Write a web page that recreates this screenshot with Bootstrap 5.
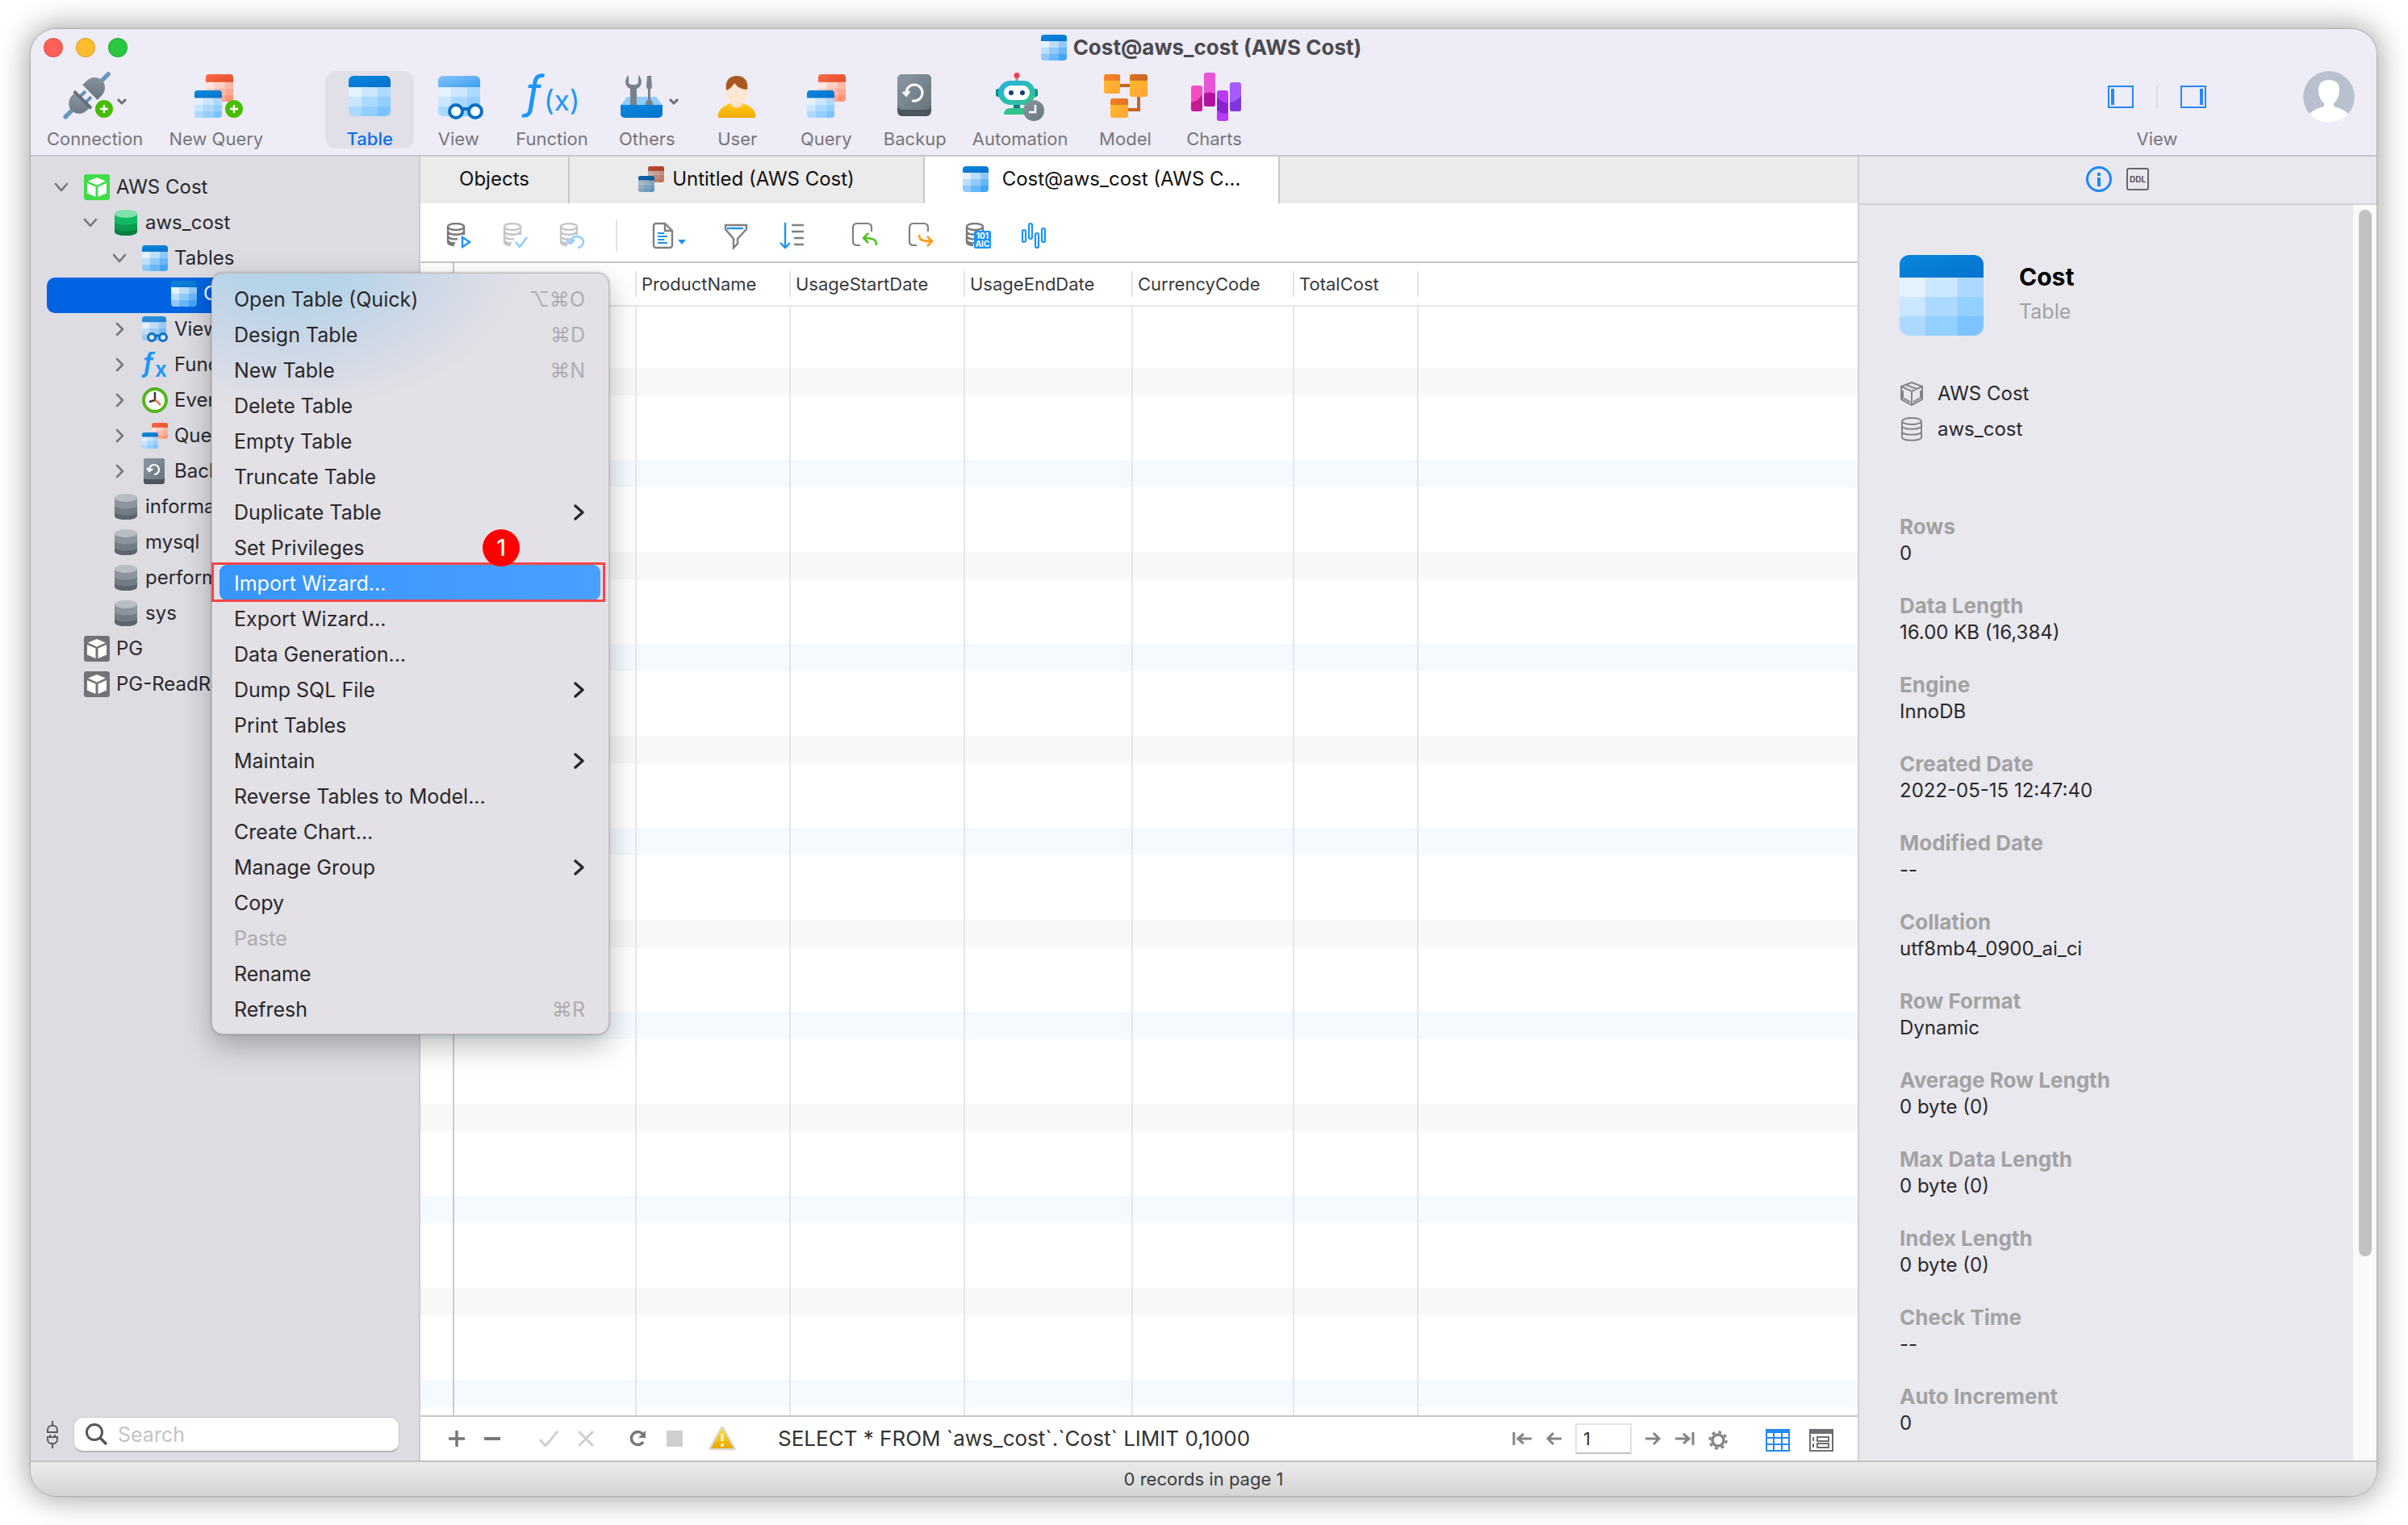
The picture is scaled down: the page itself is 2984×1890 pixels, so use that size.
<!DOCTYPE html>
<html lang="en">
<head>
<meta charset="utf-8">
<meta name="viewport" content="width=device-width, initial-scale=1">
<title>Cost@aws_cost (AWS Cost)</title>
<link href="https://cdn.jsdelivr.net/npm/bootstrap@5.3.0/dist/css/bootstrap.min.css" rel="stylesheet">
<style>
body{font-family:Inter,"Liberation Sans",sans-serif;background:#fff;color:#29282c;font-size:24px;line-height:32px}
button{font:inherit;color:inherit}
svg{display:block;flex:none}
.desk{min-height:100vh;padding:36px 39px 36px 38px}
.app-window{border-radius:32px;box-shadow:0 0 36px 4px rgba(0,0,0,.36),0 0 2px rgba(0,0,0,.5)}
.app-body,.app-top,.app-status{overflow:hidden}
/* title and toolbar */
.app-top{background:#eeecf6;border-bottom:2px solid #c6c5cb;border-radius:32px 32px 0 0}
.title-row{height:46px;padding:0 22px 0 16px}
.light{width:24px;height:24px;border-radius:50%;border:1px solid rgba(0,0,0,.15);padding:0}
.l-red{background:#ff5f57}.l-yellow{background:#febc2e}.l-green{background:#28c840}
.win-title{font-size:26px;font-weight:700;color:#4b4a4f}
.tools{padding:6px 27px 8px 4px}
.tool{border:0;background:none;min-width:110px;height:96px;padding:0 16px;font-size:22px;line-height:24px;color:#77767b;border-radius:14px;display:flex;flex-direction:column;align-items:center;gap:8px;white-space:nowrap}
.tool svg{width:80px;height:64px;margin:0 -8px;overflow:visible}
.tool.wide{min-width:114px}
.tool.active{background:#e1dfe7;color:#0a6ff0;font-weight:500}
.view-pair{gap:28px;height:64px}
.view-label{font-size:22px;line-height:24px;color:#77767b;margin-top:8px}
.thin{width:2px;background:#dddce3}
.me{width:64px;height:64px;margin-left:120px}
/* navigation tree */
.side{width:483px;background:#dddce2;border-right:2px solid #cdccd2;flex:none}
.tree{padding:18px 20px 0}
.node{height:44px;padding:0 0 4px 8px;display:flex;align-items:center;width:100%;border:0;background:none;text-align:left;white-space:nowrap;overflow:hidden}
.node .chev{width:20px;height:20px;margin-right:18px}
.node .ico{width:32px;height:32px;margin-right:8px}
.node.d1{padding-left:44px}.node.d2{padding-left:80px}.node.d3{padding-left:116px}
.node.sel{background:#0063e1;color:#fff;border-radius:10px}
.find{padding:0 24px 10px 19px;gap:18px}
.find-box{height:44px;background:#fff;border:1px solid #c9c8ce;border-bottom:2px solid #b5b4ba;border-radius:12px;padding:0 14px;gap:12px;min-width:0}
.find-box input{border:0;background:none;outline:0;font-size:25px;color:#333;padding:0;width:100%;min-width:0}
.find-box input::placeholder{color:#c4c4c6;opacity:1}
/* tabs */
.tabs{background:#ebebeb;height:58px}
.tab{border:0;border-right:2px solid #c9c9c9;background:none;color:#111;width:440px;padding:0 0 2px;gap:10px}
.tab.first{width:185px}
.tab.on{background:#fff;gap:17px}
.actions{height:74px;border-bottom:2px solid #c6c6c6;gap:38px;padding:8px 32px 0}
.act{border:0;background:none;padding:0;width:32px;height:32px}
.act svg{width:32px;height:32px;overflow:visible}
.act.drop{width:50px;margin-left:5px}
.act.apart{margin-left:20px}
.bar-rule{width:2px;height:40px;background:#e2e2e2}
/* grid */
.grid-area{background:repeating-linear-gradient(#fff 0 76px,#f8f8f8 76px 110px,#fff 110px 190px,#f4faff 190px 224px,#fff 224px 228px) 0 54px}
.grid-table{width:100%;height:100%;table-layout:fixed;border-collapse:separate;border-spacing:0}
.grid-table thead tr{height:54px}
.grid-table th{background:#fff;font-size:22px;font-weight:400;border-bottom:2px solid #e6e6e6;padding:0;color:#3a3a3c}
.grid-table th span{display:block;height:32px;line-height:32px;padding-left:6px;border-right:2px solid #e4e4e4;white-space:nowrap}
.grid-table td{border-right:2px solid #e6e6e6;padding:0}
.grid-table th.rownum,.grid-table td.rownum{border-right:2px solid #cbcacf}
.grid-table th:last-child span,.grid-table td:last-child{border-right:0}
.foot{height:56px;border-top:2px solid #c6c6c6;background:#fff;padding:0 30px 0 35px}
.foot button{border:0;background:none;padding:0}
.sql{font-size:26px;color:#333}
.page-no{width:70px;height:38px;border:2px solid #e2e2e2;border-bottom-color:#c4c4c4;padding:0 0 0 8px;font-size:22px;color:#333}
/* inspector */
.info{width:643px;background:#e9e8ee;border-left:2px solid #d0cfd5;flex:none}
.info-head{height:60px;border-bottom:2px solid #d2d1d7;gap:18px;padding:0 2px 2px 0}
.info-head button{border:0;background:none;padding:0}
.info-main{padding:62px 20px 0 50px;height:100%}
.obj-name{font-size:30px;font-weight:700;color:#000;line-height:38px}
.muted{color:#a2a1a6}
.src{gap:17px;height:44px}
.props{margin:83px 0 0}
.props dt{font-size:26px;font-weight:700;color:#a2a2a4;line-height:32px}
.props dd{margin:0 0 33px;line-height:33px}
.props dd:last-child{margin-bottom:30px}
.track{width:29px;background:#fafafa;padding:6px 7px;flex:none}
.thumb{width:16px;height:84%;background:#c2c2c2;border-radius:8px}
.app-status{height:44px;border-top:2px solid #c3c3c3;background:linear-gradient(#ebebeb,#d4d4d4);border-radius:0 0 32px 32px;font-size:22px;color:#3b3b3d}
/* context menu */
.ctx{position:absolute;left:224px;top:302px;width:493px;margin:0;padding:9px 10px 9px 9px;border:1px solid #bdbbc2;border-radius:14px;font-size:25px;background:radial-gradient(ellipse 290px 190px at 100px -20px,#b3d3e9 0,#b9d4e8 30%,rgba(197,213,231,.75) 60%,rgba(227,224,230,0) 100%),#e3e0e6;box-shadow:0 14px 36px rgba(0,0,0,.27),0 0 3px rgba(0,0,0,.3)}
.ctx li{position:relative}
.ctx .dropdown-item{height:44px;padding:2px 19px 0 18px;border-radius:9px;color:#29282c;display:flex;justify-content:space-between;align-items:center}
.ctx .dropdown-item:disabled{color:#aeacb2}
.ctx .dropdown-item.active{color:#fff;background:linear-gradient(90deg,#3795fb,#4aa0ff)}
.ctx kbd{font:inherit;background:none;color:#aeacb2;padding:0}
.ctx .framed::after{content:"";position:absolute;inset:-3px -6px -2px -10px;border:3px solid #fb4549;pointer-events:none}
.step{position:absolute;left:326px;top:-44px;width:46px;height:46px;border-radius:50%;background:#fe0000;color:#fff;font-size:28px;font-weight:500;z-index:2}
</style>
</head>
<body>
<svg width="0" height="0" class="position-absolute" aria-hidden="true">
<defs>
<linearGradient id="gb" x1="0" y1="0" x2="1" y2="1"><stop offset="0" stop-color="#0a87dc"/><stop offset="1" stop-color="#0572ce"/></linearGradient>
<linearGradient id="gl" x1="0" y1="0" x2="1" y2="1"><stop offset="0" stop-color="#86c4fb"/><stop offset="1" stop-color="#3c9ff2"/></linearGradient>
<linearGradient id="gr" x1="0" y1="0" x2="1" y2="1"><stop offset="0" stop-color="#ff6a44"/><stop offset="1" stop-color="#dc4f2c"/></linearGradient>
<linearGradient id="gg" x1="0" y1="0" x2="1" y2="1"><stop offset="0" stop-color="#8b98a2"/><stop offset="1" stop-color="#68747e"/></linearGradient>
<linearGradient id="gt" x1="0" y1="0" x2="1" y2="1"><stop offset="0" stop-color="#25b0e6"/><stop offset="1" stop-color="#31c788"/></linearGradient>
<linearGradient id="go" x1="0" y1="0" x2="1" y2="0"><stop offset="0" stop-color="#fb8428"/><stop offset="1" stop-color="#c96622"/></linearGradient>
<linearGradient id="gy" x1="0" y1="0" x2="1" y2="1"><stop offset="0" stop-color="#ffbd26"/><stop offset="1" stop-color="#ffa43a"/></linearGradient>
<linearGradient id="gw" x1="0" y1="0" x2="0" y2="1"><stop offset="0" stop-color="#ffe04a"/><stop offset="1" stop-color="#e8a600"/></linearGradient>
<linearGradient id="gu" x1="0" y1="0" x2="0" y2="1"><stop offset="0" stop-color="#ffcb1a"/><stop offset="1" stop-color="#f2a900"/></linearGradient>
<clipPath id="ct"><rect width="52" height="50" rx="6"/></clipPath>
<clipPath id="cav"><circle cx="32" cy="32" r="32"/></clipPath>
<symbol id="cells" viewBox="0 0 52 36" preserveAspectRatio="none"><path fill="#e3f2ff" d="M0 0h16v12H0z"/><path fill="#cbe6ff" d="M16 0h20v12H16zM0 12h16v12H0z"/><path fill="#acd9ff" d="M36 0h16v12H36zM16 12h20v12H16zM0 24h16v12H0z"/><path fill="#93cfff" d="M36 12h16v12H36zM16 24h20v12H16z"/><path fill="#7dc3ff" d="M36 24h16v12H36z"/></symbol>
<symbol id="cellsR" viewBox="0 0 52 36" preserveAspectRatio="none"><path fill="#ffe6e0" d="M0 0h16v12H0z"/><path fill="#ffd0c3" d="M16 0h20v12H16zM0 12h16v12H0z"/><path fill="#ffb8a4" d="M36 0h16v12H36zM16 12h20v12H16zM0 24h16v12H0z"/><path fill="#ffa88f" d="M36 12h16v12H36zM16 24h20v12H16z"/><path fill="#ff947a" d="M36 24h16v12H36z"/></symbol>
<symbol id="tbl" viewBox="0 0 52 50"><g clip-path="url(#ct)"><rect width="52" height="14" fill="url(#gb)"/><use href="#cells" y="14" width="52" height="36"/></g></symbol>
<symbol id="tblL" viewBox="0 0 52 50"><g clip-path="url(#ct)"><rect width="52" height="14" fill="url(#gl)"/><use href="#cells" y="14" width="52" height="36"/></g></symbol>
<symbol id="tblS" viewBox="0 0 52 50" preserveAspectRatio="none"><g clip-path="url(#ct)"><rect width="52" height="14" fill="url(#gb)"/><use href="#cells" y="14" width="52" height="36"/></g></symbol>
<symbol id="tblR" viewBox="0 0 52 50" preserveAspectRatio="none"><g clip-path="url(#ct)"><rect width="52" height="15" fill="url(#gr)"/><use href="#cellsR" y="14" width="52" height="36"/></g></symbol>
<symbol id="t32" viewBox="0 0 32 32"><path fill="url(#gb)" d="M4 0h24a4 4 0 0 1 4 4v4H0V4a4 4 0 0 1 4-4z"/><path fill="#e4f2fe" d="M0 8h10v8H0z"/><path fill="#bbdefb" d="M10 8h12v8H10zM0 16h10v8H0z"/><path fill="#90c9f9" d="M22 8h10v8H22zM10 16h12v8H10zM0 24h10v8H4a4 4 0 0 1-4-4z"/><path fill="#68b7f8" d="M22 16h10v8H22zM10 24h12v8H10z"/><path fill="#45a5f8" d="M22 24h10v4a4 4 0 0 1-4 4h-6z"/></symbol>
<symbol id="q32" viewBox="0 0 32 32"><use href="#tblR" x="12" y="0" width="20" height="20"/><use href="#tblS" x="0" y="12" width="20" height="20"/></symbol>
<symbol id="down" viewBox="0 0 20 20"><path d="M3 6l7 8 7-8" fill="none" stroke="#77767b" stroke-width="2.6" stroke-linecap="round" stroke-linejoin="round"/></symbol>
<symbol id="right" viewBox="0 0 20 20"><path d="M7 3l7 7-7 7" fill="none" stroke="#77767b" stroke-width="2.6" stroke-linecap="round" stroke-linejoin="round"/></symbol>
<symbol id="sub" viewBox="0 0 14 20"><path d="M2 2l9 8-9 8" fill="none" stroke="#29282c" stroke-width="3.400" stroke-linecap="round" stroke-linejoin="round"/></symbol>
<symbol id="cube" viewBox="0 0 32 32"><rect width="32" height="32" rx="3" fill="currentColor"/><path fill="#fff" d="M16 4l11 4.500-11 5L5 8.500zM4 11l10.500 4.500V28L4 23.500zM28 11l-10.500 4.500V28L28 23.500z"/></symbol>
<symbol id="dbG" viewBox="0 0 32 32"><path fill="#067e40" d="M2 20v7c0 7 28 7 28 0v-7z"/><path fill="#0a9c50" d="M2 13v9c0 6 28 6 28 0v-9z"/><path fill="#10b862" d="M2 5v9c0 6 28 6 28 0V5z"/><ellipse cx="16" cy="5" rx="14" ry="5" fill="#7fe0ac"/></symbol>
<symbol id="dbK" viewBox="0 0 32 32"><path fill="#5c656d" d="M2 20v7c0 7 28 7 28 0v-7z"/><path fill="#727c85" d="M2 13v9c0 6 28 6 28 0v-9z"/><path fill="#8c959d" d="M2 5v9c0 6 28 6 28 0V5z"/><ellipse cx="16" cy="5" rx="14" ry="5" fill="#b7bdc2"/></symbol>
<symbol id="dbl" viewBox="0 0 32 32"><g fill="none" stroke-width="2.400"><ellipse cx="12" cy="5" rx="10" ry="4"/><path d="M2 5v19c0 3 5 4 8 4M22 5v10M2 11c2 5 18 5 20 0M2 17c1 3 8 4 12 3M2 22c1 3 6 4 9 3"/></g></symbol>
<symbol id="plus" viewBox="0 0 22 22"><circle cx="11" cy="11" r="11" fill="#46bd02"/><path d="M11 6v10M6 11h10" stroke="#fff" stroke-width="2.400"/></symbol>
</defs>
</svg>
<div class="desk d-flex flex-column">
<div class="app-window position-relative d-flex flex-column flex-grow-1">
<header class="app-top">
  <div class="title-row row g-0 align-items-center">
    <div class="col d-flex gap-3"><button class="light l-red" aria-label="Close"></button><button class="light l-yellow" aria-label="Minimize"></button><button class="light l-green" aria-label="Zoom"></button></div>
    <div class="col-auto d-flex align-items-center gap-2 win-title"><svg width="32" height="32"><use href="#t32"/></svg>Cost@aws_cost (AWS Cost)</div>
    <div class="col"></div>
  </div>
  <nav class="tools d-flex" aria-label="Toolbar">
    <button class="tool"><svg viewBox="0 0 80 64"><g transform="translate(30 30) rotate(45)"><path d="M0-37v12M0 26v12" stroke="#6a97c0" stroke-width="5.500" stroke-linecap="round"/><path d="M-5-2v11M5-2v11" stroke="#5f8fba" stroke-width="4"/><path d="M-13-5v-7a13 14 0 0 1 26 0v7z" fill="url(#gg)"/><path d="M-13 7v6a13 14 0 0 0 26 0V7z" fill="url(#gg)"/><path d="M-15 6h30v4h-30z" fill="#646f78"/></g><use href="#plus" x="40" y="36" width="22" height="22"/><path d="M68 35l5 5 5-5" fill="none" stroke="#6e6d72" stroke-width="3"/></svg>Connection</button>
    <button class="tool"><svg viewBox="0 0 80 64"><use href="#tblR" x="27" y="4" width="34" height="34"/><use href="#tblS" x="13" y="24" width="34" height="34"/><use href="#plus" x="51" y="36" width="22" height="22"/></svg>New Query</button>
    <button class="tool active" style="margin-left:61px"><svg viewBox="0 0 80 64"><use href="#tbl" x="14" y="6" width="52" height="50"/></svg>Table</button>
    <button class="tool"><svg viewBox="0 0 80 64"><use href="#tblL" x="15" y="6" width="52" height="50"/><g fill="#fff" stroke="#0a6fc4" stroke-width="4"><path d="M44 47h10"/><circle cx="37" cy="50" r="8"/><circle cx="61" cy="50" r="8"/></g></svg>View</button>
    <button class="tool"><svg viewBox="0 0 80 64"><g fill="#1c96f8" font-family="Inter"><text x="6" y="46" font-size="56" font-style="italic">ƒ</text><text x="30" y="49" font-size="35">(x)</text></g></svg>Function</button>
    <button class="tool wide"><svg viewBox="0 0 80 64"><path d="M15 32h36l8 11H7z" fill="#8fcbfb"/><path d="M17 5c-6 6-5 14 2 17v22h8V22c7-3 8-11 2-17v10l-3 2h-6l-3-2z" fill="#77838c"/><path d="M40 6h5l1 14-2 3v12l3 4v4h-9v-4l3-4V23l-2-3z" fill="#77838c"/><path d="M7 42h52v11a5 5 0 0 1-5 5H12a5 5 0 0 1-5-5z" fill="url(#gb)"/><path d="M68 35l5 5 5-5" fill="none" stroke="#6e6d72" stroke-width="3"/></svg>Others</button>
    <button class="tool"><svg viewBox="0 0 80 64"><path d="M16 58v-4c1-8 9-12 16-14h14c7 2 15 6 16 14v4z" fill="url(#gu)"/><path d="M32 36h14v7q-7 6-14 0z" fill="#ffdcc0"/><ellipse cx="39" cy="26" rx="14" ry="16" fill="#ffe6d2"/><path d="M26 24c-2-12 4-18 13-18s15 6 13 17q-10 0-16-8-4 7-10 9z" fill="#a9591f"/></svg>User</button>
    <button class="tool"><svg viewBox="0 0 80 64"><use href="#tblR" x="30" y="4" width="34" height="34"/><use href="#tblS" x="16" y="24" width="34" height="34"/></svg>Query</button>
    <button class="tool"><svg viewBox="0 0 80 64"><rect x="18" y="4" width="42" height="52" rx="6" fill="#4c555d"/><path d="M24 4h30a6 6 0 0 1 6 6v32a6 6 0 0 1-6 6H24a6 6 0 0 1-6-6V10a6 6 0 0 1 6-6z" fill="url(#gg)"/><path d="M29 27a10 10 0 1 1 10 10h-3M25 26l4 4 4-5" fill="none" stroke="#fff" stroke-width="3"/></svg>Backup</button>
    <button class="tool"><svg viewBox="0 0 80 64"><path d="M36 6v8" stroke="#9a9a9a" stroke-width="3"/><circle cx="36" cy="5.500" r="3.500" fill="#f23d4f"/><rect x="10" y="22" width="52" height="10" rx="3" fill="#0c8c86"/><path d="M32 40h8v8h-8z" fill="#0c7f86"/><path d="M20 54q0-8 8-8h18v8z" fill="#32c48a"/><rect x="13" y="12" width="46" height="30" rx="15" fill="url(#gt)"/><rect x="20" y="18" width="32" height="18" rx="9" fill="#fff"/><circle cx="29" cy="27" r="3" fill="#123f7c"/><circle cx="43" cy="27" r="3" fill="#123f7c"/><circle cx="57" cy="49" r="13" fill="url(#gg)"/><path d="M59 42v9h-8" fill="none" stroke="#fff" stroke-width="2.600"/></svg>Automation</button>
    <button class="tool"><svg viewBox="0 0 80 64"><path d="M34 18h12M57 32v16H44" fill="none" stroke="#c96622" stroke-width="4"/><g fill="url(#gy)"><rect x="14" y="4" width="20" height="24" rx="3"/><rect x="46" y="4" width="22" height="28" rx="3"/><rect x="22" y="34" width="22" height="24" rx="3"/></g><g fill="url(#go)"><path d="M17 4h14a3 3 0 0 1 3 3v5H14V7a3 3 0 0 1 3-3zM49 4h16a3 3 0 0 1 3 3v5H46V7a3 3 0 0 1 3-3zM25 34h16a3 3 0 0 1 3 3v5H22v-5a3 3 0 0 1 3-3z"/></g></svg>Model</button>
    <button class="tool"><svg viewBox="0 0 80 64"><rect x="12" y="18" width="14" height="32" rx="3" fill="#f54cc4"/><path d="M12 39q9-2 14-10v18a3 3 0 0 1-3 3h-8a3 3 0 0 1-3-3z" fill="#c81a93"/><rect x="28" y="2" width="14" height="42" rx="3" fill="#e955d6"/><path d="M28 28q7-3 14 0v13a3 3 0 0 1-3 3h-8a3 3 0 0 1-3-3z" fill="#b0139d"/><rect x="44" y="24" width="14" height="38" rx="3" fill="#b83af6"/><path d="M44 32q5 7 14 8v12q-8 2-14-4z" fill="#8a22cf"/><rect x="60" y="14" width="14" height="36" rx="3" fill="#a45cff"/><path d="M60 39q9-2 14-8v16a3 3 0 0 1-3 3h-8a3 3 0 0 1-3-3z" fill="#7f37db"/></svg>Charts</button>
    <div class="ms-auto d-flex">
      <div class="d-flex flex-column align-items-center">
        <div class="view-pair d-flex align-items-center">
          <button class="border-0 bg-transparent p-0" aria-label="Toggle navigation pane"><svg width="32" height="28"><path d="M1 1h30v26H1z" fill="none" stroke="#2487ff" stroke-width="2"/><path d="M4 4h4v20H4z" fill="#2487ff"/></svg></button>
          <div class="thin" style="height:28px"></div>
          <button class="border-0 bg-transparent p-0" aria-label="Toggle information pane"><svg width="32" height="28"><path d="M1 1h30v26H1z" fill="none" stroke="#2487ff" stroke-width="2"/><path d="M24 4h4v20h-4z" fill="#2487ff"/></svg></button>
        </div>
        <div class="view-label">View</div>
      </div>
      <svg class="me" viewBox="0 0 64 64" role="img" aria-label="Account"><g clip-path="url(#cav)"><circle cx="32" cy="32" r="32" fill="#b9c0ce"/><path d="M32 11c9 0 13 5 13 12 0 10-4 14-7 17v4c8 2 17 6 20 12v8H6v-8c3-6 12-10 20-12v-4c-3-3-7-7-7-17 0-7 4-12 13-12z" fill="#fff"/></g></svg>
    </div>
  </nav>
</header>

<div class="app-body d-flex flex-grow-1">
  <aside class="side d-flex flex-column">
    <div class="tree flex-grow-1" id="tree"></div>
    <div class="find d-flex align-items-center">
      <svg width="16" height="34" viewBox="0 0 16 34" fill="none" stroke="#5c5b60" stroke-width="2"><path d="M8 0v6M2 14h12v-3c0-7-12-7-12 0zM2 20h12v3c0 7-12 7-12 0zM5 17v3M11 17v3M8 28v6"/></svg>
      <label class="find-box d-flex align-items-center flex-grow-1"><svg width="28" height="28" viewBox="0 0 28 28" fill="none" stroke="#555459" stroke-width="3"><circle cx="11" cy="11" r="9.500"/><path d="M18 18l8 8" stroke-width="3.500"/></svg><input type="search" placeholder="Search" aria-label="Search"></label>
    </div>
  </aside>

  <main class="d-flex flex-column flex-grow-1 overflow-hidden bg-white">
    <div class="tabs d-flex" role="tablist">
      <button class="tab first" role="tab">Objects</button>
      <button class="tab d-flex align-items-center justify-content-center" role="tab"><svg width="32" height="32" style="filter:brightness(.75)"><use href="#q32"/></svg>Untitled (AWS Cost)</button>
      <button class="tab on d-flex align-items-center justify-content-center" role="tab" aria-selected="true"><svg width="32" height="32"><use href="#t32"/></svg>Cost@aws_cost (AWS C...</button>
    </div>
    <div class="actions d-flex align-items-center">
      <button class="act" aria-label="Begin transaction"><svg viewBox="0 0 32 32"><use href="#dbl" stroke="#7b7b7b" width="32" height="32"/><path d="M20 18v12l9-6z" fill="#fff" stroke="#1c93f8" stroke-width="2.400"/></svg></button>
      <button class="act" aria-label="Commit"><svg viewBox="0 0 32 32"><use href="#dbl" stroke="#c6c6c6" width="32" height="32"/><path d="M16 24l5 6 9-12" fill="none" stroke="#93cbfc" stroke-width="2.600"/></svg></button>
      <button class="act" aria-label="Rollback"><svg viewBox="0 0 32 32"><use href="#dbl" stroke="#c6c6c6" width="32" height="32"/><path d="M14 23a8 7 0 1 1 9 8M9 21l5 5 5-5" fill="none" stroke="#93cbfc" stroke-width="2.600"/></svg></button>
      <div class="bar-rule"></div>
      <button class="act drop" aria-label="Text"><svg viewBox="0 0 32 32"><path d="M5 1h11l9 9v18a3 3 0 0 1-3 3H5a3 3 0 0 1-3-3V4a3 3 0 0 1 3-3zM16 1v9h9" fill="none" stroke="#808080" stroke-width="2.400"/><path d="M7 13h8M7 17h12M7 21h8M7 25h12" stroke="#1c93f8" stroke-width="2.200"/><path d="M32 21h10l-5 6z" fill="#1c93f8"/></svg></button>
      <button class="act" aria-label="Filter"><svg viewBox="0 0 32 32"><path d="M3 3h26v5L18 20v6l-5 5V20L3 8z" fill="none" stroke="#808080" stroke-width="2.400"/><path d="M5 7h20" stroke="#1c93f8" stroke-width="2.400"/></svg></button>
      <button class="act" aria-label="Sort"><svg viewBox="0 0 32 32"><path d="M7 0v30M1 25l6 6 6-6" fill="none" stroke="#1c93f8" stroke-width="2.400"/><path d="M15 3h15M15 11h15M18 19h12M18 27h12" stroke="#808080" stroke-width="2.400"/></svg></button>
      <button class="act apart" aria-label="Import"><svg viewBox="0 0 32 32"><path d="M24 11V6c0-4-2-5-5-5H6C3 1 1 3 1 6v17c0 3 2 5 5 5h4" fill="none" stroke="#808080" stroke-width="2.200"/><path d="M30 28c0-7-3-9-16-9M20 13l-6 6 6 6" fill="none" stroke="#4dc41a" stroke-width="2.600"/></svg></button>
      <button class="act" aria-label="Export"><svg viewBox="0 0 32 32"><path d="M24 11V6c0-4-2-5-5-5H6C3 1 1 3 1 6v17c0 3 2 5 5 5h4" fill="none" stroke="#808080" stroke-width="2.200"/><path d="M13 15c0 6 3 8 16 8M23 17l6 6-6 6" fill="none" stroke="#fb9a18" stroke-width="2.600"/></svg></button>
      <button class="act" aria-label="Data generation"><svg viewBox="0 0 32 32"><use href="#dbl" stroke="#7b7b7b" width="32" height="32"/><rect x="11" y="10" width="21" height="22" rx="2" fill="#1c93f8"/><g fill="#fff" font-family="Inter" font-size="10" font-weight="700" text-anchor="middle"><text x="21.500" y="20">101</text><text x="21.500" y="30">AIC</text></g></svg></button>
      <button class="act" aria-label="Create chart"><svg viewBox="0 0 32 32" fill="none" stroke="#1c93f8" stroke-width="2.200"><rect x="1" y="9" width="4" height="15" rx="2"/><rect x="9" y="1" width="4" height="19" rx="2"/><rect x="17" y="13" width="4" height="18" rx="2"/><rect x="25" y="7" width="4" height="17" rx="2"/></svg></button>
    </div>
    <div class="grid-area flex-grow-1">
      <table class="grid-table">
        <colgroup><col style="width:42px"><col style="width:226px"><col style="width:191px"><col style="width:216px"><col style="width:208px"><col style="width:200px"><col style="width:154px"><col></colgroup>
        <thead><tr><th class="rownum"></th><th><span></span></th><th scope="col"><span>ProductName</span></th><th scope="col"><span>UsageStartDate</span></th><th scope="col"><span>UsageEndDate</span></th><th scope="col"><span>CurrencyCode</span></th><th scope="col"><span>TotalCost</span></th><th></th></tr></thead>
        <tbody><tr><td class="rownum"></td><td></td><td></td><td></td><td></td><td></td><td></td><td></td></tr></tbody>
      </table>
    </div>
    <div class="foot d-flex align-items-center">
      <div class="d-flex align-items-center" style="gap:24px">
        <button aria-label="Add record"><svg width="20" height="20"><path d="M10 0v20M0 10h20" stroke="#77767a" stroke-width="3.500"/></svg></button>
        <button aria-label="Delete record"><svg width="20" height="20"><path d="M0 10h20" stroke="#77767a" stroke-width="4"/></svg></button>
        <button aria-label="Apply changes" class="ms-4"><svg width="24" height="20"><path d="M1 11l7 8L23 1" fill="none" stroke="#cfcfcf" stroke-width="3"/></svg></button>
        <button aria-label="Discard changes"><svg width="20" height="20"><path d="M1 1l18 18M19 1L1 19" stroke="#cfcfcf" stroke-width="3"/></svg></button>
        <button aria-label="Refresh" style="margin-left:20px"><svg width="22" height="20" viewBox="0 0 22 20"><path d="M17 14a8 8 0 1 1 0-9" fill="none" stroke="#77767a" stroke-width="3.500"/><path d="M20 0v9h-9z" fill="#77767a"/></svg></button>
        <button aria-label="Stop"><svg width="20" height="20"><path d="M0 0h20v20H0z" fill="#cfcfcf"/></svg></button>
        <svg class="ms-2" width="34" height="32" viewBox="0 0 34 32"><path d="M17 3L31 28H3z" fill="url(#gw)" stroke="#dcdcdc" stroke-width="5" stroke-linejoin="round"/><path d="M17 2L31 28H3z" fill="url(#gw)"/><path d="M17 10v9M17 22v4" stroke="#fff3c0" stroke-width="3.500"/></svg>
      </div>
      <div class="sql" style="margin-left:52px">SELECT * FROM `aws_cost`.`Cost` LIMIT 0,1000</div>
      <div class="d-flex align-items-center ms-auto gap-3">
        <button aria-label="First page"><svg width="26" height="20"><path d="M2 2v16M24 10H8M14 4l-7 6 7 6" fill="none" stroke="#858489" stroke-width="3"/></svg></button>
        <button aria-label="Previous page"><svg width="20" height="20"><path d="M19 10H2M9 3l-7 7 7 7" fill="none" stroke="#858489" stroke-width="3"/></svg></button>
        <input class="page-no" value="1" aria-label="Page">
        <button aria-label="Next page"><svg width="20" height="20"><path d="M1 10h17M11 3l7 7-7 7" fill="none" stroke="#858489" stroke-width="3"/></svg></button>
        <button aria-label="Last page"><svg width="26" height="20"><path d="M24 2v16M2 10h16M12 4l7 6-7 6" fill="none" stroke="#858489" stroke-width="3"/></svg></button>
        <button aria-label="Page settings" class="pt-1"><svg width="26" height="26" viewBox="0 0 26 26" fill="none" stroke="#858489"><circle cx="13" cy="13" r="7" stroke-width="3.400"/><circle cx="13" cy="13" r="10.200" stroke-width="3" stroke-dasharray="4 4"/></svg></button>
        <button aria-label="Grid view" class="pt-1" style="margin-left:30px"><svg width="30" height="28" viewBox="0 0 30 28"><path d="M0 0h30v28H0z" fill="#2487ff"/><g fill="#fff"><path d="M2 5h7v5H2zM11 5h8v5h-8zM21 5h7v5h-7zM2 12h7v6H2zM11 12h8v6h-8zM21 12h7v6h-7zM2 20h7v6H2zM11 20h8v6h-8zM21 20h7v6h-7z"/></g></svg></button>
        <button aria-label="Form view" class="pt-1 ms-2"><svg width="30" height="28" viewBox="0 0 30 28" fill="none" stroke="#6d6c71" stroke-width="2"><path d="M1 1h28v26H1z"/><path d="M1 4h28" stroke-width="4"/><path d="M10 10h14v5H10zM10 18h14v5H10zM5 10v5M5 18v5"/></svg></button>
      </div>
    </div>
  </main>

  <aside class="info d-flex flex-column">
    <div class="info-head d-flex align-items-center justify-content-center">
      <button aria-label="General"><svg width="32" height="32"><circle cx="16" cy="16" r="14.500" fill="none" stroke="#1a86ff" stroke-width="3"/><path d="M16 8v4M16 14v11" stroke="#1a86ff" stroke-width="4"/></svg></button>
      <button aria-label="DDL"><svg width="28" height="28"><rect x="1" y="1" width="26" height="26" rx="2" fill="none" stroke="#68676c" stroke-width="2"/><text x="14" y="18" font-family="Inter" font-size="10" font-weight="700" text-anchor="middle" fill="#55545a">DDL</text></svg></button>
    </div>
    <div class="d-flex flex-grow-1">
      <div class="info-main flex-grow-1">
        <div class="d-flex" style="gap:44px"><svg width="104" height="100"><use href="#tbl"/></svg><div class="d-flex flex-column pt-2"><div class="obj-name">Cost</div><div class="muted mt-2" style="font-size:25px">Table</div></div></div>
        <div class="src d-flex align-items-center" style="margin-top:50px"><svg width="30" height="30" viewBox="0 0 30 30" fill="none" stroke="#858489" stroke-width="2"><path d="M15 1l13 5v16l-13 7-13-7V6zM2 6l13 6 13-6M15 12v17M8 4l13 5M4 11v9l9 5M26 11v9l-9 5"/></svg>AWS Cost</div>
        <div class="src d-flex align-items-center"><svg width="30" height="30" viewBox="0 0 30 30" fill="none" stroke="#858489" stroke-width="2"><ellipse cx="15" cy="5" rx="12" ry="4"/><path d="M3 5v20c0 5 24 5 24 0V5M3 11c0 5 24 5 24 0M3 18c0 5 24 5 24 0"/></svg>aws_cost</div>
        <dl class="props">
          <dt>Rows</dt><dd>0</dd><dt>Data Length</dt><dd>16.00 KB (16,384)</dd><dt>Engine</dt><dd>InnoDB</dd><dt>Created Date</dt><dd>2022-05-15 12:47:40</dd><dt>Modified Date</dt><dd>--</dd><dt>Collation</dt><dd>utf8mb4_0900_ai_ci</dd><dt>Row Format</dt><dd>Dynamic</dd><dt>Average Row Length</dt><dd>0 byte (0)</dd><dt>Max Data Length</dt><dd>0 byte (0)</dd><dt>Index Length</dt><dd>0 byte (0)</dd><dt>Check Time</dt><dd>--</dd><dt>Auto Increment</dt><dd>0</dd>
        </dl>
      </div>
      <div class="track"><div class="thumb"></div></div>
    </div>
  </aside>
</div>
<footer class="app-status d-flex align-items-center justify-content-center">0 records in page 1</footer>

<ul class="dropdown-menu show ctx" id="ctx"></ul>
</div>
</div>
<script>
const tree=[
 [0,'down','cube','AWS Cost','#3fdc48'],[1,'down','dbG','aws_cost'],[2,'down','t32','Tables'],[3,'','t32','Cost'],
 [2,'right','view','Views'],[2,'right','fx','Functions'],[2,'right','clock','Events'],[2,'right','q32','Queries'],[2,'right','bak','Backups'],
 [1,'','dbK','information_schema'],[1,'','dbK','mysql'],[1,'','dbK','performance_schema'],[1,'','dbK','sys'],
 [0,'','cube','PG','#737377'],[0,'','cube','PG-ReadReplica','#737377']];
const art={
 view:'<use href="#t32" width="30" height="30" opacity=".85"/><g fill="#dcecfb" stroke="#0a6fc4" stroke-width="3"><circle cx="12" cy="26" r="4.500"/><circle cx="26" cy="26" r="4.500"/><path d="M17 24h4"/></g>',
 fx:'<g fill="#1c96f8" font-family="Inter" font-weight="600"><text x="0" y="25" font-size="34" font-style="italic">ƒ</text><text x="16" y="31" font-size="26">x</text></g>',
 clock:'<circle cx="16" cy="16" r="14" fill="#fbfbfb" stroke="#55b51e" stroke-width="4"/><path d="M16 6v10l-7 2" fill="none" stroke="#333" stroke-width="2.400"/><path d="M16 15l7 7" stroke="#f0623c" stroke-width="2.200"/>',
 bak:'<rect x="2" width="26" height="32" rx="3" fill="#4c555d"/><rect x="2" width="26" height="26" rx="3" fill="url(#gg)"/><path d="M9 14a6 6 0 1 1 6 6M6 12l3 4 4-3" fill="none" stroke="#fff" stroke-width="2.200"/>'};
document.getElementById('tree').innerHTML=tree.map(([d,c,i,t,k])=>
 `<button class="node d${d}${t==='Cost'?' sel':''}"><svg class="chev">${c?`<use href="#${c}"/>`:''}</svg><svg class="ico" viewBox="0 0 32 32"${k?` color="${k}"`:''}>${art[i]||`<use href="#${i}" width="32" height="32"/>`}</svg>${t}</button>`).join('');
const menu=[['Open Table (Quick)','⌥⌘O'],['Design Table','⌘D'],['New Table','⌘N'],['Delete Table'],['Empty Table'],['Truncate Table'],['Duplicate Table','>'],['Set Privileges'],['Import Wizard...'],['Export Wizard...'],['Data Generation...'],['Dump SQL File','>'],['Print Tables'],['Maintain','>'],['Reverse Tables to Model...'],['Create Chart...'],['Manage Group','>'],['Copy'],['Paste'],['Rename'],['Refresh','⌘R']];
document.getElementById('ctx').innerHTML=menu.map(([t,s])=>{
 const on=t.startsWith('Import');
 return `<li${on?' class="framed"':''}><button class="dropdown-item${on?' active':''}"${t==='Paste'?' disabled':''}>${t}${s==='>'?'<svg width="14" height="20"><use href="#sub"/></svg>':s?`<kbd>${s}</kbd>`:''}</button>${on?'<span class="step d-flex align-items-center justify-content-center">1</span>':''}</li>`}).join('');
</script>
<script src="https://cdn.jsdelivr.net/npm/bootstrap@5.3.0/dist/js/bootstrap.bundle.min.js"></script>
</body>
</html>
